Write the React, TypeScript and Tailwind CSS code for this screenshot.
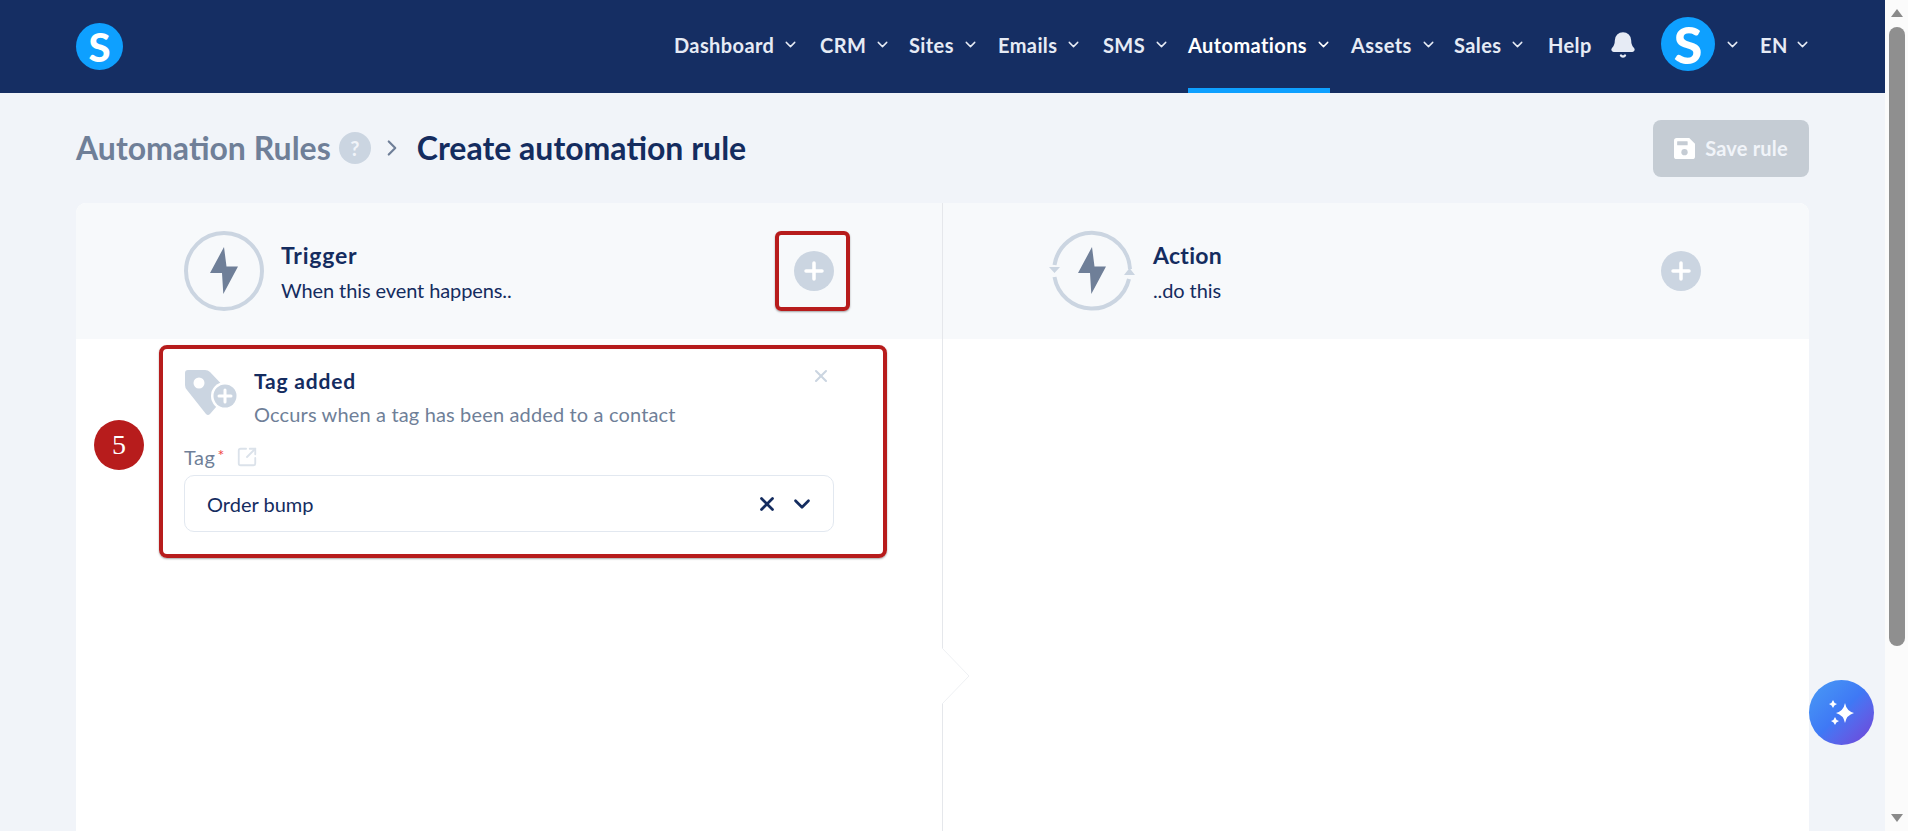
import React from 'react';
import { ChevronDown, ChevronRight, X, SquareArrowOutUpRight, Bell } from 'lucide-react';

const navItems = [
  { label: 'Dashboard', w: 'w-[146px]' },
  { label: 'CRM', w: 'w-[89px]' },
  { label: 'Sites', w: 'w-[89px]' },
  { label: 'Emails', w: 'w-[105px]' },
  { label: 'SMS', w: 'w-[85px]' },
  { label: 'Automations', w: 'w-[163px]', active: true },
  { label: 'Assets', w: 'w-[103px]' },
  { label: 'Sales', w: 'w-[94px]' },
];

const Bolt = () => (
  <svg viewBox="0 0 28 48" className="h-[48px] w-[28px]">
    <path d="M14 0 L0 26 H12 L13.300 47 L28 19.500 H16.500 Z" fill="#6f7f98" />
  </svg>
);

const PlusCircle = () => (
  <div className="flex h-[40px] w-[40px] items-center justify-center rounded-full bg-[#cbd5e1]">
    <svg viewBox="0 0 20 20" className="h-[20px] w-[20px]">
      <path d="M10 2 V18 M2 10 H18" stroke="#ffffff" strokeWidth="3.5" strokeLinecap="round" />
    </svg>
  </div>
);

const TagIcon = () => (
  <svg viewBox="0 0 54 46" className="h-[46px] w-[54px] shrink-0">
    <path d="M3 0 H20 Q23 0 25 2 L44 22 L25 44 Q23 46 21 44 L2 20 Q0 18 0 15 V3 Q0 0 3 0 Z" fill="#cbd5e1" />
    <circle cx="14" cy="13" r="5.5" fill="#ffffff" />
    <circle cx="40" cy="26" r="14" fill="#ffffff" />
    <circle cx="40" cy="26" r="11.5" fill="#cbd5e1" />
    <path d="M40 20 V32 M34 26 H46" stroke="#ffffff" strokeWidth="3" strokeLinecap="round" />
  </svg>
);

const Logo = ({ size }: { size: 'sm' | 'lg' }) => (
  <div
    className={
      size === 'lg'
        ? 'flex h-[54px] w-[54px] items-center justify-center rounded-full bg-[#0ea0ff] font-["Lato",sans-serif] text-[52px] leading-none font-black text-white'
        : 'flex h-[47px] w-[47px] items-center justify-center rounded-full bg-[#0ea0ff] font-["Lato",sans-serif] text-[40px] leading-none font-black text-white'
    }
  >
    S
  </div>
);

export default function App() {
  return (
    <div className='flex h-[831px] w-[1908px] overflow-hidden bg-[#f1f4f9] font-["Lato",sans-serif] text-[#142c5f]'>
      <div className="relative flex h-full w-[1885px] flex-col">
        <header className="flex h-[93px] shrink-0 items-center bg-[#152e63] pl-[76px]">
          <Logo size="sm" />
          <nav className="ml-[551px] flex h-full items-center whitespace-nowrap">
            {navItems.map((item) => (
              <div
                key={item.label}
                className={`relative flex h-full items-center gap-[8px] pb-[4px] text-[20px] font-bold tracking-[0.4px] ${item.w} ${item.active ? 'text-white' : 'text-[#e6ebf5]'}`}
              >
                {item.label}
                <ChevronDown className="h-[17px] w-[17px]" strokeWidth={2} />
                {item.active && <div className="absolute bottom-0 left-0 h-[5px] w-[142px] bg-[#0ea0ff]" />}
              </div>
            ))}
            <span className="-mt-[4px] w-[61px] text-[20px] font-bold tracking-[0.4px] text-[#e6ebf5]">Help</span>
            <Bell className="-mt-[4px] h-[28px] w-[28px] fill-[#e6ebf5] text-[#e6ebf5]" />
            <div className="ml-[24px] -mt-[5px]">
              <Logo size="lg" />
            </div>
            <ChevronDown className="-mt-[4px] ml-[9px] h-[17px] w-[17px] text-[#e6ebf5]" strokeWidth={2} />
            <span className="-mt-[4px] ml-[19px] text-[20px] font-bold tracking-[0.4px] text-[#e6ebf5]">EN</span>
            <ChevronDown className="-mt-[4px] ml-[6px] h-[17px] w-[17px] text-[#e6ebf5]" strokeWidth={2} />
          </nav>
        </header>

        <main className="flex min-h-0 flex-1 flex-col px-[76px]">
          <div className="flex h-[110px] shrink-0 items-center justify-between">
            <div className="flex items-center">
              <span className="text-[32px] font-bold text-[#6f7f98]">Automation Rules</span>
              <div className="ml-[8px] flex h-[32px] w-[32px] items-center justify-center rounded-full bg-[#cbd5e1] text-[20px] font-bold text-[#f1f4f9]">?</div>
              <ChevronRight className="ml-[8px] h-[26px] w-[26px] text-[#6f7f98]" strokeWidth={2} />
              <span className="ml-[12px] text-[32px] font-bold text-[#142c5f]">Create automation rule</span>
            </div>
            <button className="flex h-[57px] w-[156px] items-center justify-center gap-[10px] rounded-[8px] bg-[#c5ccd4] text-[20px] font-bold tracking-[0.2px] text-[#f1f4f9]">
              <svg viewBox="0 0 20 20" className="h-[21px] w-[21px]">
                <path d="M2.500 0 H14.500 L20 5.500 V17.500 Q20 20 17.500 20 H2.500 Q0 20 0 17.500 V2.500 Q0 0 2.500 0 Z" fill="#ffffff" />
                <rect x="3" y="3" width="10" height="4" rx="0.5" fill="#c5ccd4" />
                <circle cx="10" cy="13.500" r="3" fill="#c5ccd4" />
              </svg>
              Save rule
            </button>
          </div>

          <div className="relative flex flex-1 rounded-t-[10px] bg-white">
            <section className="flex w-[867px] flex-col border-r border-[#e5e7eb]">
              <div className="flex h-[136px] items-center rounded-tl-[10px] bg-[#f7f9fb] pl-[108px]">
                <div className="flex h-[80px] w-[80px] items-center justify-center rounded-full border-[4px] border-[#cbd5e1]">
                  <Bolt />
                </div>
                <div className="ml-[17px] w-[513px]">
                  <div className="text-[23px] leading-[28px] font-bold tracking-[0.8px]">Trigger</div>
                  <div className="mt-[9px] text-[20px] leading-[24px] tracking-[-0.1px]">When this event happens..</div>
                </div>
                <PlusCircle />
              </div>

              <div className="relative ml-[109px] mt-[31px] w-[649px]">
                <div className="flex items-start">
                  <TagIcon />
                  <div className="ml-[15px] -mt-[1px]">
                    <div className="text-[21px] leading-[24px] font-bold tracking-[0.8px]">Tag added</div>
                    <div className="mt-[9px] text-[20px] leading-[24px] tracking-[0.15px] text-[#6f7f98]">Occurs when a tag has been added to a contact</div>
                  </div>
                  <X className="ml-auto mr-[3px] -mt-[4px] h-[20px] w-[20px] text-[#cbd5e1]" strokeWidth={2.5} />
                </div>
                <div className="-ml-[1px] mt-[19px] flex h-[24px] items-center text-[20px] tracking-[0.5px] text-[#6f7f98]">
                  Tag<span className="ml-[2px] -mt-[4px] text-[16px] text-[#ef4444]">*</span>
                  <SquareArrowOutUpRight className="ml-[11px] h-[22px] w-[22px] text-[#dbe2ea]" strokeWidth={2} />
                </div>
                <div className="-ml-[1px] mt-[6px] flex h-[57px] items-center rounded-[10px] border border-[#e2e8f0] bg-white pl-[22px] pr-[18px] text-[20px]">
                  Order bump
                  <X className="ml-auto h-[22px] w-[22px]" strokeWidth={3} />
                  <ChevronDown className="ml-[11px] h-[26px] w-[26px]" strokeWidth={2.5} />
                </div>
              </div>
            </section>

            <section className="flex flex-1 flex-col">
              <div className="flex h-[136px] items-center rounded-tr-[10px] bg-[#f7f9fb] pl-[107px]">
                <div className="relative flex h-[84px] w-[84px] items-center justify-center">
                  <svg viewBox="0 0 84 84" className="absolute inset-0 h-[84px] w-[84px] overflow-visible" fill="none">
                    <path d="M4.500 36 A38 38 0 0 1 80 40" stroke="#cbd5e1" strokeWidth="4" />
                    <path d="M79 50 A38 38 0 0 1 4.500 48" stroke="#cbd5e1" strokeWidth="4" />
                    <path d="M-1 38 H10 L4.500 44 Z M74 46 H85 L79.500 39 Z" fill="#cbd5e1" />
                  </svg>
                  <Bolt />
                </div>
                <div className="ml-[19px] w-[508px]">
                  <div className="text-[23px] leading-[28px] font-bold tracking-[0.3px]">Action</div>
                  <div className="mt-[9px] text-[20px] leading-[24px] tracking-[-0.1px]">..do this</div>
                </div>
                <PlusCircle />
              </div>
            </section>

            <svg viewBox="0 0 28 56" className="absolute left-[866px] top-[445px] h-[56px] w-[28px]" fill="#ffffff">
              <path d="M0 0 L27 28 L0 56" stroke="#eef0f3" strokeWidth="1" />
            </svg>

            {/* tutorial highlights */}
            <div className="absolute left-[699px] top-[28px] h-[80px] w-[75px] rounded-[6px] border-[4px] border-[#b71c1c] shadow-[0_1px_2px_rgba(0,0,0,0.35)]" />
            <div className="absolute left-[83px] top-[142px] h-[213px] w-[728px] rounded-[8px] border-[4px] border-[#b71c1c] shadow-[0_1px_2px_rgba(0,0,0,0.35)]" />
            <div className='absolute left-[18px] top-[217px] flex h-[50px] w-[50px] items-center justify-center rounded-full bg-[#b71c1c] font-["Liberation_Serif",serif] text-[28px] text-white'>5</div>
          </div>
        </main>

        <div className="absolute left-[1809px] top-[680px] flex h-[65px] w-[65px] items-center justify-center rounded-full bg-gradient-to-br from-[#4a9bf5] via-[#3f78f5] to-[#6f3fd6]">
          <svg viewBox="0 0 32 32" className="h-[32px] w-[32px]" fill="#ffffff">
            <path d="M19 6 Q20.500 14 28 16 Q20.500 18 19 26 Q17.500 18 10 16 Q17.500 14 19 6 Z" />
            <path d="M7 3 Q7.800 6.200 11 7 Q7.800 7.800 7 11 Q6.200 7.800 3 7 Q6.200 6.200 7 3 Z" />
            <path d="M9 20 Q9.800 23.200 13 24 Q9.800 24.800 9 28 Q8.200 24.800 5 24 Q8.200 23.200 9 20 Z" />
          </svg>
        </div>
      </div>

      <div className="flex h-full w-[23px] flex-col items-center bg-[#fbfbfb]">
        <div className="mt-[9px] h-0 w-0 border-x-[6px] border-b-[8px] border-x-transparent border-b-[#8a8a8a]" />
        <div className="mt-[10px] h-[619px] w-[16px] rounded-full bg-[#8f8f8f]" />
        <div className="mt-auto mb-[9px] h-0 w-0 border-x-[6px] border-t-[8px] border-x-transparent border-t-[#8a8a8a]" />
      </div>
    </div>
  );
}
